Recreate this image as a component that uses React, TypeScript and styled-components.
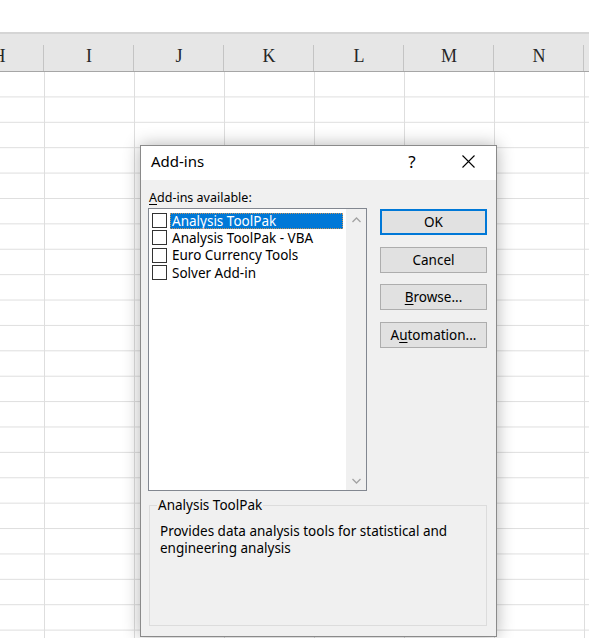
import styled, { createGlobalStyle } from "styled-components";

const GlobalStyle = createGlobalStyle`
  html, body {
    margin: 0;
    padding: 0;
    background: #ffffff;
  }
  * {
    box-sizing: border-box;
  }
`;

const UI_FONT = `"Noto Sans", "Open Sans", "Liberation Sans", sans-serif`;

const Page = styled.div`
  position: relative;
  width: 589px;
  height: 638px;
  overflow: hidden;
  background: #ffffff;
  font-family: ${UI_FONT};
`;

const TopSpace = styled.div`
  height: 32px;
  background: #ffffff;
`;

const HeaderRow = styled.div`
  display: flex;
  height: 40px;
  background: #e6e6e6;
  border-top: 2px solid #d5d5d5;
  border-bottom: 1px solid #a6a6a6;
  margin-left: -46px;
`;

const HeaderCell = styled.div`
  position: relative;
  flex: 0 0 90px;
  display: flex;
  align-items: flex-end;
  justify-content: center;
  padding-bottom: 5px;
  font-family: "Liberation Serif", "DejaVu Serif", serif;
  font-size: 18px;
  line-height: 20px;
  color: #262626;

  &::after {
    content: "";
    position: absolute;
    right: 0;
    top: 11px;
    bottom: 0;
    width: 1px;
    background: #c4c4c4;
  }
`;

const Cells = styled.div`
  height: 566px;
  background-color: #ffffff;
  background-image: linear-gradient(to right, #dedede 1px, transparent 1px),
    linear-gradient(to bottom, transparent 24.4px, #dedede 24.4px);
  background-size: 90px 100%, 100% 25.4px;
  background-position: 44px 0, 0 0;
`;

const Dialog = styled.div`
  position: absolute;
  left: 140px;
  top: 145px;
  width: 357px;
  height: 492px;
  display: flex;
  flex-direction: column;
  border: 1px solid #8a8a8a;
  background: #f0f0f0;
  box-shadow: 0 0 16px rgba(0, 0, 0, 0.3);
`;

const TitleBar = styled.div`
  display: flex;
  align-items: center;
  height: 34px;
  padding-left: 10px;
  padding-bottom: 4px;
  background: #ffffff;
`;

const Title = styled.div`
  flex: 1;
  font-size: 15px;
  color: #000000;
`;

const TitleActions = styled.div`
  display: flex;
  align-items: center;
  gap: 36px;
  margin-right: 18px;
`;

const TitleIcon = styled.div`
  width: 20px;
  height: 20px;
  display: flex;
  align-items: center;
  justify-content: center;
  font-size: 17px;
  color: #000000;
`;

const Body = styled.div`
  flex: 1;
  display: flex;
  flex-direction: column;
  padding: 9px 9px 10px 7px;
`;

const FieldLabel = styled.div`
  font-size: 12.5px;
  line-height: 17px;
  color: #000000;
  padding-left: 1px;
  margin-bottom: 2px;
`;

const Key = styled.u`
  text-underline-offset: 2px;
`;

const MainRow = styled.div`
  display: flex;
  align-items: flex-start;
`;

const ListBox = styled.div`
  width: 219px;
  height: 283px;
  display: flex;
  background: #ffffff;
  border: 1px solid #828790;
`;

const Items = styled.div`
  flex: 1;
  padding: 3px 0 0 3px;
`;

const Item = styled.div`
  display: flex;
  align-items: center;
  height: 17.3px;
`;

const CheckBox = styled.span`
  flex: 0 0 15px;
  height: 15px;
  border: 1px solid #333333;
  background: #ffffff;
`;

const ItemText = styled.span<{ $selected?: boolean }>`
  flex: 1;
  height: 16px;
  margin-left: 3px;
  margin-right: 3px;
  padding-left: 2px;
  font-size: 13.5px;
  line-height: 16px;
  white-space: nowrap;
  color: ${(p) => (p.$selected ? "#ffffff" : "#000000")};
  background: ${(p) => (p.$selected ? "#0078d7" : "transparent")};
  outline: ${(p) => (p.$selected ? "1px dotted #c9955a" : "none")};
  outline-offset: -1px;
`;

const ScrollBar = styled.div`
  flex: 0 0 20px;
  display: flex;
  flex-direction: column;
  justify-content: space-between;
  align-items: center;
  padding: 8px 0 6px;
  background: #f0f0f0;
`;

const Buttons = styled.div`
  display: flex;
  flex-direction: column;
  gap: 11.7px;
  margin-left: 13px;
  margin-top: 1px;
`;

const Button = styled.div<{ $default?: boolean }>`
  width: 107px;
  height: 26px;
  display: flex;
  align-items: center;
  justify-content: center;
  font-size: 13.5px;
  color: #000000;
  background: #e1e1e1;
  border: ${(p) => (p.$default ? "2px solid #0078d7" : "1px solid #adadad")};
`;

const Group = styled.fieldset`
  flex: 1;
  margin: 6px 0 0 1px;
  padding: 10px 10px 0 10px;
  border: 1px solid #dcdcdc;
  min-width: 0;
`;

const GroupTitle = styled.legend`
  margin-left: -3px;
  padding: 0 1px;
  font-size: 13.5px;
  line-height: 16px;
  color: #000000;
`;

const Description = styled.div`
  font-size: 13.5px;
  line-height: 17px;
  color: #000000;
`;

const Chevron = ({ up }: { up?: boolean }) => (
  <svg width="9" height="6" viewBox="0 0 9 6">
    <polyline
      points={up ? "0.5,5 4.5,1 8.5,5" : "0.5,1 4.5,5 8.5,1"}
      fill="none"
      stroke="#a3a3a3"
      strokeWidth="1.3"
    />
  </svg>
);

const CloseIcon = () => (
  <svg width="13" height="13" viewBox="0 0 13 13">
    <path d="M0.5 0.5 L12.5 12.5 M12.5 0.5 L0.5 12.5" stroke="#000" strokeWidth="1.1" />
  </svg>
);

const columns = ["H", "I", "J", "K", "L", "M", "N", ""];
const addins = ["Analysis ToolPak", "Analysis ToolPak - VBA", "Euro Currency Tools", "Solver Add-in"];

export default function App() {
  return (
    <Page>
      <GlobalStyle />
      <TopSpace />
      <HeaderRow>
        {columns.map((c, i) => (
          <HeaderCell key={i}>{c}</HeaderCell>
        ))}
      </HeaderRow>
      <Cells />

      <Dialog>
        <TitleBar>
          <Title>Add-ins</Title>
          <TitleActions>
            <TitleIcon>?</TitleIcon>
            <TitleIcon>
              <CloseIcon />
            </TitleIcon>
          </TitleActions>
        </TitleBar>
        <Body>
          <FieldLabel>
            <Key>A</Key>dd-ins available:
          </FieldLabel>
          <MainRow>
            <ListBox>
              <Items>
                {addins.map((name, i) => (
                  <Item key={name}>
                    <CheckBox />
                    <ItemText $selected={i === 0}>{name}</ItemText>
                  </Item>
                ))}
              </Items>
              <ScrollBar>
                <Chevron up />
                <Chevron />
              </ScrollBar>
            </ListBox>
            <Buttons>
              <Button $default>OK</Button>
              <Button>Cancel</Button>
              <Button>
                <span>
                  <Key>B</Key>rowse...
                </span>
              </Button>
              <Button>
                <span>
                  A<Key>u</Key>tomation...
                </span>
              </Button>
            </Buttons>
          </MainRow>
          <Group>
            <GroupTitle>Analysis ToolPak</GroupTitle>
            <Description>
              Provides data analysis tools for statistical and
              <br />
              engineering analysis
            </Description>
          </Group>
        </Body>
      </Dialog>
    </Page>
  );
}
